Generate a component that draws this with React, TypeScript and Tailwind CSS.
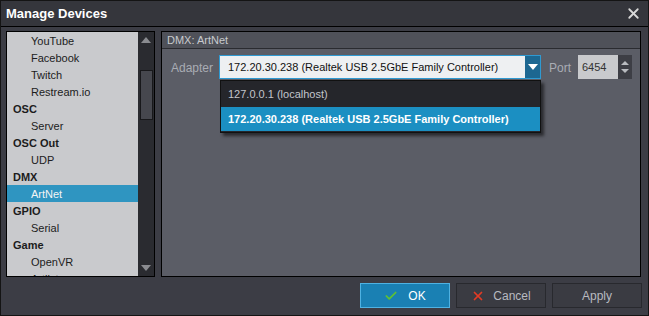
import { Check, X } from 'lucide-react';

const items = [
  { name: 'YouTube', child: true },
  { name: 'Facebook', child: true },
  { name: 'Twitch', child: true },
  { name: 'Restream.io', child: true },
  { name: 'OSC', child: false },
  { name: 'Server', child: true },
  { name: 'OSC Out', child: false },
  { name: 'UDP', child: true },
  { name: 'DMX', child: false },
  { name: 'ArtNet', child: true, selected: true },
  { name: 'GPIO', child: false },
  { name: 'Serial', child: true },
  { name: 'Game', child: false },
  { name: 'OpenVR', child: true },
  { name: 'Artlist', child: true },
];

const Triangle = ({ down, color }: { down?: boolean; color: string }) => (
  <svg width="10" height="6" viewBox="0 0 10 6">
    <path d={down ? 'M0 0 L10 0 L5 6 Z' : 'M0 6 L10 6 L5 0 Z'} fill={color} />
  </svg>
);

export default function App() {
  return (
    <div
      className="w-[649px] h-[316px] bg-[#3c3d45] border border-[#141414] flex flex-col text-[11px]"
      style={{ fontFamily: '"Liberation Sans", Arial, sans-serif' }}
    >
      {/* Title bar */}
      <div className="h-[26px] bg-[#35363c] border-b border-black flex items-center justify-between pl-[5px] pr-[6px]">
        <span className="text-[13px] font-bold text-white">Manage Devices</span>
        <X className="w-[17px] h-[17px] text-[#d8d8d8]" strokeWidth={2.5} />
      </div>

      <div className="flex gap-[6px] pl-[5px] pt-[4px]">
        {/* Device list */}
        <div className="w-[149px] h-[246px] border border-black flex">
          <div className="w-[131px] bg-[#c9cacd] overflow-hidden">
            {items.map((it) => (
              <div
                key={it.name}
                className={
                  'h-[17px] flex items-center pt-[1px] leading-none ' +
                  (it.child ? 'pl-[24px] ' : 'pl-[6px] font-bold ') +
                  (it.selected ? 'bg-[#2f95c1] text-[#f4f4f4]' : 'text-[#1c1c1c]')
                }
              >
                {it.name}
              </div>
            ))}
          </div>
          <div className="flex-1 bg-[#2a2b30] flex flex-col items-center">
            <div className="h-[16px] flex items-center justify-center">
              <Triangle color="#8a8b90" />
            </div>
            <div className="mt-[22px] w-[13px] h-[50px] bg-[#46474e] border border-[#18181b]" />
            <div className="flex-1" />
            <div className="h-[16px] flex items-center justify-center">
              <Triangle down color="#8a8b90" />
            </div>
          </div>
        </div>

        {/* Settings panel */}
        <div className="relative w-[480px] h-[246px] border border-black bg-[#5b5d66] flex flex-col">
          <div className="h-[17px] bg-[#4f5159] border-b border-[#2a2b30] flex items-center pl-[5px] text-[#c8cace]">
            DMX: ArtNet
          </div>
          <div className="flex items-center pl-[9px] mt-[6px]">
            <span className="w-[48px] pt-[1px] text-[#a9acb4] text-[12px]">Adapter</span>
            <div className="w-[322px] h-[24px] border border-[#2f9ad2] bg-[#eef0f2] flex">
              <div className="flex-1 flex items-center pl-[8px] text-[#111]">
                172.20.30.238 (Realtek USB 2.5GbE Family Controller)
              </div>
              <div className="w-[15px] bg-[#1d6791] flex items-center justify-center">
                <Triangle down color="#ffffff" />
              </div>
            </div>
            <span className="ml-[8px] w-[29px] pt-[1px] text-[#a9acb4] text-[12px]">Port</span>
            <div className="w-[40px] h-[24px] bg-[#c9cacd] flex items-center pl-[4px] text-[#333]">6454</div>
            <div className="w-[14px] h-[24px] bg-[#3d3e45] flex flex-col items-center justify-center">
              <svg width="10" height="16" viewBox="0 0 10 16">
                <path d="M1 6 L5 2 L9 6 Z M1 10 L5 14 L9 10 Z" fill="#b9bbc0" />
              </svg>
            </div>
          </div>

          {/* Open dropdown */}
          <div className="absolute left-[58px] top-[48px] w-[321px] h-[53px] bg-[#25262b] border border-[#111] shadow-[3px_3px_3px_rgba(0,0,0,0.55)] flex flex-col">
            <div className="h-[26px] flex items-center pl-[7px] text-[#c3c5cb]">127.0.0.1 (localhost)</div>
            <div className="h-[24px] bg-[#1b8fc2] flex items-center pl-[7px] font-bold text-white">
              172.20.30.238 (Realtek USB 2.5GbE Family Controller)
            </div>
          </div>
        </div>
      </div>

      {/* Buttons */}
      <div className="flex justify-end gap-[6px] pr-[6px] mt-[6px]">
        <button className="w-[90px] h-[25px] bg-[#1a80b3] border border-[#4fb2e2] flex items-center justify-center gap-[10px] text-white text-[12px]">
          <Check className="w-[14px] h-[14px] text-[#5fc232]" strokeWidth={3} />
          OK
        </button>
        <button className="w-[90px] h-[25px] bg-[#3a3b42] border border-[#28292e] flex items-center justify-center gap-[8px] text-[#b8bac0] text-[12px]">
          <X className="w-[14px] h-[14px] text-[#e23b25]" strokeWidth={3} />
          Cancel
        </button>
        <button className="w-[90px] h-[25px] bg-[#3a3b42] border border-[#28292e] flex items-center justify-center text-[#b8bac0] text-[12px]">
          Apply
        </button>
      </div>
    </div>
  );
}
